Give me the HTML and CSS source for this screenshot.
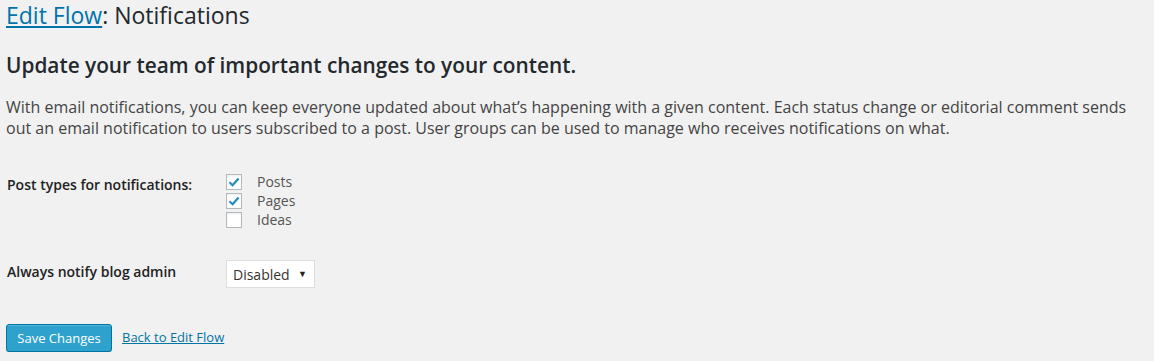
FILE: index.html
```html
<!DOCTYPE html>
<html>
<head>
<meta charset="utf-8">
<link rel="stylesheet" href="styles.css">
</head>
<body>
<div class="wrap">
  <h2 class="page-title"><a href="#">Edit Flow</a>: Notifications</h2>
  <h3 class="section-title">Update your team of important changes to your content.</h3>
  <p class="desc">With email notifications, you can keep everyone updated about what’s happening with a given content. Each status change or editorial comment sends out an email notification to users subscribed to a post. User groups can be used to manage who receives notifications on what.</p>
  <div class="form-table">
    <div class="row">
      <div class="th">Post types for notifications:</div>
      <div class="td checks">
        <label class="check"><span class="box checked"><svg viewBox="0 0 16 16" width="16" height="16"><path d="M3.5 8.2 L6.6 11.2 L12.6 4.6" fill="none" stroke="#1e8cbe" stroke-width="2.2"/></svg></span>Posts</label>
        <label class="check"><span class="box checked"><svg viewBox="0 0 16 16" width="16" height="16"><path d="M3.5 8.2 L6.6 11.2 L12.6 4.6" fill="none" stroke="#1e8cbe" stroke-width="2.2"/></svg></span>Pages</label>
        <label class="check"><span class="box"></span>Ideas</label>
      </div>
    </div>
    <div class="row row-admin">
      <div class="th">Always notify blog admin</div>
      <div class="td">
        <div class="select">Disabled<span class="arrow">▼</span></div>
      </div>
    </div>
  </div>
  <div class="submit">
    <button class="button-primary">Save Changes</button>
    <a class="back" href="#">Back to Edit Flow</a>
  </div>
</div>
</body>
</html>
```
FILE: styles.css
```css
html, body {
  margin: 0;
  padding: 0;
  background: #f1f1f1;
}
body {
  font-family: "Open Sans", sans-serif;
  color: #444;
  font-size: 14px;
  line-height: 1.5;
}
.wrap {
  padding: 0 10px 0 6px;
}
.page-title {
  margin: 0;
  padding: 1px 0 0;
  font-size: 23px;
  font-weight: 400;
  line-height: 29px;
  color: #23282d;
}
.page-title a {
  color: #0073aa;
  text-decoration: underline;
}
.section-title {
  margin: 22px 0 0;
  font-size: 20.8px;
  font-weight: 600;
  line-height: 27px;
  color: #23282d;
}
.desc {
  margin: 18px 0 0;
  font-size: 16px;
  line-height: 21px;
  color: #444;
}
.form-table {
  margin-top: 20px;
}
.row {
  display: flex;
}
.th {
  width: 220px;
  flex: none;
  font-weight: 600;
  color: #222;
  padding: 15px 0 0 1px;
  box-sizing: border-box;
  line-height: 21px;
}
.checks {
  display: flex;
  flex-direction: column;
  padding-top: 13px;
}
.check {
  display: flex;
  align-items: center;
  height: 19px;
  line-height: 19px;
  font-size: 14px;
  color: #555;
}
.box {
  width: 14px;
  height: 14px;
  border: 1px solid #b4b9be;
  background: #fff;
  margin-right: 15px;
  position: relative;
  flex: none;
  box-shadow: inset 0 1px 2px rgba(0,0,0,.07);
}
.box svg {
  position: absolute;
  left: -1px;
  top: -1px;
}
.row-admin {
  margin-top: 31px;
}
.row-admin .th {
  padding-top: 1px;
}
.select {
  box-sizing: border-box;
  width: 89px;
  height: 28px;
  border: 1px solid #ddd;
  background: #fff;
  color: #333;
  font-size: 14px;
  display: flex;
  align-items: center;
  justify-content: space-between;
  padding: 0 7px 0 6px;
}
.arrow {
  font-size: 9px;
  color: #222;
}
.submit {
  margin-top: 36px;
  display: flex;
  align-items: center;
  gap: 10px;
}
.button-primary {
  box-sizing: border-box;
  height: 28px;
  width: 106px;
  background: #2ea2cc;
  border: 1px solid #0074a2;
  border-radius: 3px;
  color: #fff;
  font-family: "Open Sans", sans-serif;
  font-size: 13px;
  padding: 0 10px 1px;
  box-shadow: inset 0 1px 0 rgba(120,200,230,.5), 0 1px 0 rgba(0,0,0,.15);
}
.back {
  font-size: 13px;
  color: #0074a2;
  text-decoration: underline;
}
```
